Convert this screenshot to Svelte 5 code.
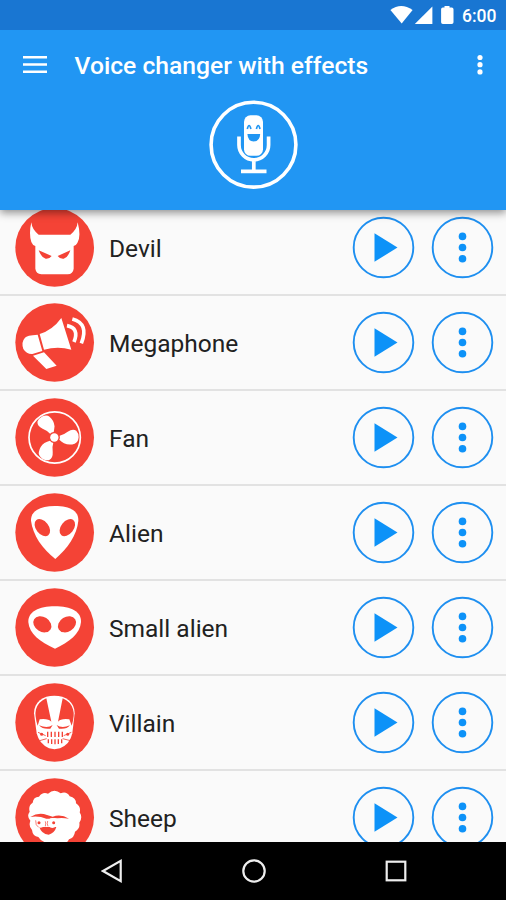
<script>
  const effects = [
    { name: 'Devil', icon: 'devil' },
    { name: 'Megaphone', icon: 'megaphone' },
    { name: 'Fan', icon: 'fan' },
    { name: 'Alien', icon: 'alien' },
    { name: 'Small alien', icon: 'small-alien' },
    { name: 'Villain', icon: 'villain' },
    { name: 'Sheep', icon: 'sheep' },
  ];
  const bladeAngles = [0, 120, 240];
</script>

<div class="screen">
  <div class="status">
    <svg class="signals" width="66" height="30" viewBox="0 0 66 30" fill="#fff">
      <path d="M.4 10Q11 2.200 22.600 10L11.700 23.600Z" />
      <path d="M42.400 6.400V24H24.800Z" />
      <path d="M54.500 6h5v1.400h2.200q1.800 0 1.800 1.800v13q0 1.800-1.800 1.800h-8.800q-1.800 0-1.800-1.800v-13q0-1.800 1.800-1.800h1.600Z" />
    </svg>
    <span class="clock">6:00</span>
  </div>

  <header>
    <div class="toolbar">
      <svg class="burger" width="24" height="18" viewBox="0 0 24 18" fill="#fff">
        <path d="M0 0h24v2.600H0zM0 7.200h24v2.600H0zM0 14.400h24v2.600H0z" />
      </svg>
      <h1>Voice changer with effects</h1>
      <svg class="overflow" width="6" height="22" viewBox="0 0 6 22" fill="#fff">
        <circle cx="3" cy="3.500" r="2.600" /><circle cx="3" cy="10.700" r="2.600" /><circle cx="3" cy="17.900" r="2.600" />
      </svg>
    </div>
    <svg class="mic" width="90" height="90" viewBox="0 0 90 90">
      <circle cx="45.500" cy="44.700" r="42.400" fill="none" stroke="#fff" stroke-width="3.600" />
      <rect x="36" y="15.300" width="19" height="40.500" rx="6.500" fill="#fff" />
      <path d="M31 36.500v8.500a14.800 14.800 0 0 0 29.600 0v-8.500M45.800 60v11M33 71.300h25.500" fill="none" stroke="#fff" stroke-width="3.700" />
      <path d="M39.300 29q1.800-7 3.600 0M48.400 29q1.800-7 3.600 0" fill="none" stroke="#2196f3" stroke-width="1.700" />
      <path d="M39.400 34h12.800q-.4 7.400-6.400 7.400T39.400 34Z" fill="#2196f3" />
    </svg>
  </header>

  <main>
    {#each effects as effect}
      <div class="row">
        <svg class="avatar" width="80" height="80" viewBox="45 23 240 240" fill="#fff">
          <circle cx="164" cy="141.500" r="118" fill="#f44336" />
          {#if effect.icon === 'devil'}
            <path d="M94 66Q96 88 116 103H211Q231 88 233 66Q244 109 232 128Q228 136 221 137V205Q219 221 203 222H124Q108 220 106 205V137Q97 134 94 125Q86 100 94 66Z" />
            <path d="M116 150L155 167Q149 176 137 175Q124 172 116 150ZM211 150L173 167Q179 176 191 175Q204 172 211 150Z" fill="#f44336" />
          {:else if effect.icon === 'megaphone'}
            <path d="M184 68L214 163Q174 152 132 163L119 116Q158 104 184 68Z" />
            <path d="M113 118L127 167L97 176Q80 177 70 161Q63 140 75 127Q80 120 113 118Z" />
            <path d="M99 181L132 171L170 211L139 221Z" />
            <path d="M201 91Q239 98 222 140M217 71Q268 85 244 144" fill="none" stroke="#fff" stroke-width="11" />
          {:else if effect.icon === 'fan'}
            <circle cx="164" cy="141.500" r="77" fill="none" stroke="#fff" stroke-width="5" />
            {#each bladeAngles as angle}
              <path d="M179 136Q190 134 203 124Q218 114 229 121Q236 128 236 141Q234 157 224 160Q208 166 192 159Q185 154 178 148Q181 142 179 136Z" transform="rotate({angle} 163 141.500)" />
            {/each}
            <circle cx="163" cy="141.500" r="12.500" />
          {:else if effect.icon === 'alien'}
            <path d="M164 62C211 62 236 77 235 106C231 149 203 188 166 221C127 190 99 151 93 106C92 77 121 62 164 62Z" />
            <ellipse cx="127" cy="127" rx="29" ry="19" transform="rotate(52 127 127)" fill="#f44336" />
            <ellipse cx="202" cy="127" rx="29" ry="19" transform="rotate(-52 202 127)" fill="#f44336" />
          {:else if effect.icon === 'small-alien'}
            <path d="M164 78C214 78 244 94 243 125C240 161 209 184 165 205C119 184 88 161 85 125C84 94 117 78 164 78Z" />
            <ellipse cx="127" cy="132" rx="29" ry="22" transform="rotate(32 127 132)" fill="#f44336" />
            <ellipse cx="201" cy="132" rx="29" ry="22" transform="rotate(-32 201 132)" fill="#f44336" />
          {:else if effect.icon === 'villain'}
            <path d="M163 61C197 61 224 79 224 114L217 174Q210 207 180 219Q163 224 147 219Q117 205 110 174L102 114C102 79 129 61 163 61Z" />
            <path d="M139 69L154 139Q145 129 119 132L113 151Q103 121 108 102Q115 79 139 69ZM188 69L174 139Q182 129 208 132L215 151Q225 121 219 102Q212 79 188 69Z" fill="#f44336" />
            <path d="M121 137Q143 134 152 148Q133 156 123 147ZM206 137Q184 134 175 148Q194 156 204 147Z" />
            <path d="M117 150Q143 160 158 149L151 160Q128 163 117 150ZM210 150Q185 160 170 149L177 160Q200 163 210 150Z" fill="#f44336" />
            <path d="M143 169V185M154 169V185M165 169V185M176 169V185M187 169V185M145 192V204M155 192V206M165 192V207M175 192V206M185 192V204" fill="none" stroke="#f44336" stroke-width="4" />
            <path d="M137 181L114 171M191 181L214 171M140 190L119 196M188 190L211 196" fill="none" stroke="#f44336" stroke-width="2.500" />
            <circle cx="125" cy="177" r="4.500" fill="#f44336" /><circle cx="203" cy="177" r="4.500" fill="#f44336" />
          {:else}
            <path d="M144 70Q163 53 182 69Q200 62 209 78Q228 82 228 99Q244 110 239 126Q249 142 238 157Q241 175 225 184Q223 202 207 207Q198 225 178 220Q162 230 145 216Q126 218 115 200Q98 198 96 179Q85 169 91 151Q79 138 89 124Q84 106 98 97Q100 79 117 79Q127 64 144 70Z" />
            <path d="M91 140Q116 124 141 134L158 139Q183 130 207 145Q185 141 172 144Q164 141 152 145L139 145Q116 136 91 140Z" fill="#f44336" />
            <path d="M118 170H169Q164 188 146 193Q124 191 118 170Z" fill="#f44336" />
            <circle cx="122" cy="158" r="14" /><circle cx="157" cy="158" r="15" />
            <circle cx="117" cy="157" r="4.500" fill="#f44336" /><circle cx="161" cy="157" r="4.500" fill="#f44336" />
            <path d="M107 150Q106 166 116 171M136 153Q138 160 136 168M144 168Q140 160 143 152" fill="none" stroke="#f44336" stroke-width="2" />
          {/if}
        </svg>
        <span class="name">{effect.name}</span>
        <svg class="button" width="62" height="62" viewBox="0.5 0.5 62 62">
          <circle cx="31" cy="31" r="29.800" fill="none" stroke="#1e8ff0" stroke-width="1.900" />
          <path d="M22 16.800L45 31L22 45.300Z" fill="#0d92f8" />
        </svg>
        <svg class="button" width="62" height="62" viewBox="0.5 0.5 62 62">
          <circle cx="31" cy="31" r="29.800" fill="none" stroke="#1e8ff0" stroke-width="1.900" />
          <g fill="#0d92f8"><circle cx="31" cy="19.900" r="3.800" /><circle cx="31" cy="31" r="3.800" /><circle cx="31" cy="42.200" r="3.800" /></g>
        </svg>
      </div>
    {/each}
  </main>

  <nav>
    <svg width="22" height="24" viewBox="0 0 22 24"><path d="M2 12L19.700 1.900V22.100Z" /></svg>
    <svg width="24" height="24" viewBox="0 0 24 24"><circle cx="12" cy="12" r="10.700" /></svg>
    <svg width="22" height="24" viewBox="0 0 22 24"><rect x="1.700" y="2.700" width="18.600" height="18.600" /></svg>
  </nav>
</div>

<style>
  .screen {
    width: 506px;
    height: 900px;
    display: flex;
    flex-direction: column;
    overflow: hidden;
    background: #fafafa;
    font-family: Roboto, sans-serif;
  }
  svg {
    display: block;
    flex: none;
  }
  .button {
    overflow: visible;
  }
  .status {
    height: 30px;
    flex: none;
    z-index: 2;
    display: flex;
    justify-content: flex-end;
    align-items: center;
    box-sizing: border-box;
    padding-right: 9px;
    background: #1976d2;
    color: #fff;
  }
  .clock {
    width: 35px;
    margin-left: 6px;
    padding-top: 2px;
    font-size: 17.500px;
    line-height: 28px;
    font-weight: 500;
    white-space: nowrap;
  }
  header {
    height: 180px;
    flex: none;
    z-index: 1;
    background: #2196f3;
    box-shadow: 0 3px 8px rgba(0, 0, 0, 0.42);
  }
  .toolbar {
    height: 70px;
    display: flex;
    align-items: center;
    padding: 0 23px;
  }
  h1 {
    flex: 1;
    margin: 2px 0 0 27.500px;
    color: #fff;
    font-size: 24.700px;
    line-height: 30px;
    font-weight: 500;
    white-space: nowrap;
  }
  .mic {
    margin: 0 auto;
  }
  main {
    height: 632px;
    flex: none;
    overflow: hidden;
  }
  .row {
    height: 95px;
    box-sizing: border-box;
    display: flex;
    align-items: center;
    padding: 0 12px 0 15px;
    border-bottom: 2px solid #e2e2e2;
  }
  .row:first-child {
    margin-top: -9px;
  }
  .name {
    flex: 1;
    margin: 2px 0 0 14px;
    color: #212121;
    font-size: 24.500px;
    line-height: 30px;
    white-space: nowrap;
  }
  .button + .button {
    margin-left: 17px;
  }
  nav {
    height: 58px;
    flex: none;
    box-sizing: border-box;
    display: flex;
    justify-content: space-between;
    align-items: center;
    padding: 0 99px 0 101px;
    background: #000;
  }
  nav svg {
    fill: none;
    stroke: #eee;
    stroke-width: 2.200;
  }
</style>
